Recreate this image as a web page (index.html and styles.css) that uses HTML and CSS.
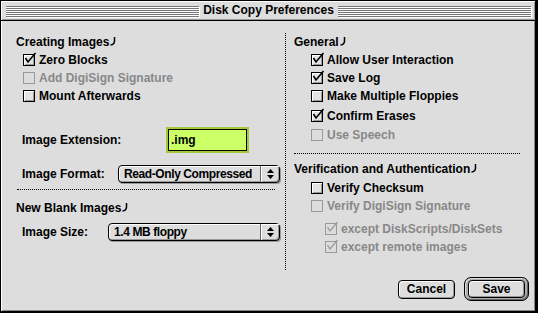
FILE: index.html
```html
<!DOCTYPE html>
<html lang="en">
  <head>
    <meta charset="UTF-8" />
    <title>Disk Copy Preferences</title>
    <link rel="stylesheet" href="styles.css">
  </head>
  <body>
    <div class="window">
      <div class="titlebar">
        <span class="stripes"></span>
        <span class="title">Disk Copy Preferences</span>
        <span class="stripes"></span>
      </div>

      <div class="content">
        <div class="col left">
          <div class="heading">Creating Images<svg class="mark" width="6" height="10"><path d="M4.5 1 V5 Q4.5 8.5 0.5 9" /></svg></div>
          <div class="check on"><span class="box"><svg width="14" height="14"><path d="M2.5 6 L5 10 L12.5 1" /></svg></span>Zero Blocks</div>
          <div class="check off"><span class="box"></span>Add DigiSign Signature</div>
          <div class="check"><span class="box"></span>Mount Afterwards</div>

          <div class="field-row">
            <span class="label ext">Image Extension:</span>
            <span class="field">.img</span>
          </div>
          <div class="popup-row">
            <span class="label fmt">Image Format:</span>
            <span class="popup"><span class="value">Read-Only Compressed</span><span class="arrows"><svg width="7" height="10"><polygon points="0,4 3.5,0 7,4" /><polygon points="0,6 3.5,10 7,6" /></svg></span></span>
          </div>
          <div class="sep"></div>
          <div class="heading blank">New Blank Images<svg class="mark" width="6" height="10"><path d="M4.5 1 V5 Q4.5 8.5 0.5 9" /></svg></div>
          <div class="popup-row size">
            <span class="label sz">Image Size:</span>
            <span class="popup"><span class="value">1.4 MB floppy</span><span class="arrows"><svg width="7" height="10"><polygon points="0,4 3.5,0 7,4" /><polygon points="0,6 3.5,10 7,6" /></svg></span></span>
          </div>
        </div>

        <div class="col right">
          <div class="heading">General<svg class="mark" width="6" height="10"><path d="M4.5 1 V5 Q4.5 8.5 0.5 9" /></svg></div>
          <div class="check on"><span class="box"><svg width="14" height="14"><path d="M2.5 6 L5 10 L12.5 1" /></svg></span>Allow User Interaction</div>
          <div class="check on"><span class="box"><svg width="14" height="14"><path d="M2.5 6 L5 10 L12.5 1" /></svg></span>Save Log</div>
          <div class="check"><span class="box"></span>Make Multiple Floppies</div>
          <div class="check on confirm"><span class="box"><svg width="14" height="14"><path d="M2.5 6 L5 10 L12.5 1" /></svg></span>Confirm Erases</div>
          <div class="check off speech"><span class="box"></span>Use Speech</div>
          <div class="sep wide"></div>
          <div class="heading verify">Verification and Authentication<svg class="mark" width="6" height="10"><path d="M4.5 1 V5 Q4.5 8.5 0.5 9" /></svg></div>
          <div class="check checksum"><span class="box"></span>Verify Checksum</div>
          <div class="check off"><span class="box"></span>Verify DigiSign Signature</div>
          <div class="check off on sub first"><span class="box"><svg width="14" height="14"><path d="M2.5 6 L5 10 L12.5 1" /></svg></span>except DiskScripts/DiskSets</div>
          <div class="check off on sub"><span class="box"><svg width="14" height="14"><path d="M2.5 6 L5 10 L12.5 1" /></svg></span>except remote images</div>
        </div>
      </div>

      <div class="footer">
        <button class="btn">Cancel</button>
        <span class="default-ring"><button class="btn">Save</button></span>
      </div>
    </div>
  </body>
</html>
```

FILE: styles.css
```css
body {
  margin: 0;
  padding: 0;
  background: #000;
  font-family: "Liberation Sans", Arial, sans-serif;
  font-size: 12px;
  font-weight: bold;
  color: #000;
}

.window {
  width: 538px;
  height: 313px;
  box-sizing: border-box;
  border: 1px solid #000;
  border-right-width: 3px;
  border-bottom-width: 2px;
  background: #dddddd;
  box-shadow: inset 1px 1px 0 #fff, inset -1px -1px 0 #888;
  display: flex;
  flex-direction: column;
}

/* title bar */
.titlebar {
  height: 19px;
  border-bottom: 1px solid #000;
  display: flex;
  align-items: center;
  padding: 0 4px 0 5px;
  box-shadow: inset 1px 1px 0 #fff, inset -1px -1px 0 #999;
}

.titlebar .stripes {
  flex: 1;
  height: 11px;
  margin-top: 1px;
  background: repeating-linear-gradient(to bottom, #777 0 1px, #fff 1px 2px);
  box-shadow: 1px 1px 0 #fff;
}

.titlebar .title {
  padding: 0 4px;
  font-size: 12px;
  line-height: 19px;
}

/* columns */
.content {
  display: flex;
  padding-top: 12px;
  height: 237px;
}

.col {
  display: flex;
  flex-direction: column;
}

.left {
  width: 284px;
  box-sizing: border-box;
  padding: 0 5px 0 15px;
}

.right {
  flex: 1;
  border-left: 1px dotted #000;
  padding: 0 15px 0 8px;
}

.heading {
  height: 18px;
  line-height: 18px;
  display: flex;
  align-items: center;
  white-space: nowrap;
}

.heading .mark {
  margin-left: 1px;
  margin-top: -3px;
}

.heading .mark path {
  fill: none;
  stroke: #000;
  stroke-width: 1.5;
}

/* checkboxes */
.check {
  height: 18px;
  display: flex;
  align-items: center;
  gap: 4px;
  padding-left: 7px;
  white-space: nowrap;
}

.right .check {
  padding-left: 17px;
}

.right .check.sub {
  padding-left: 31px;
}

.check .box {
  position: relative;
  flex: none;
  width: 12px;
  height: 12px;
  box-sizing: border-box;
  border: 1px solid #000;
  background: #e4e4e4;
  box-shadow: inset 1px 1px 0 #fff, inset -1px -1px 0 #999;
}

.check .box svg {
  position: absolute;
  left: -1px;
  top: -3px;
  overflow: visible;
}

.check .box path {
  fill: none;
  stroke: #000;
  stroke-width: 1.6;
}

.check.off {
  color: #888;
}

.check.off .box {
  border-color: #999;
  background: #ddd;
  box-shadow: none;
}

.check.off .box path {
  stroke: #999;
  stroke-width: 1.3;
}

.check.confirm {
  margin-top: 2px;
}

.check.speech {
  margin-top: 1px;
}

.check.checksum {
  margin-top: 1px;
}

.check.sub.first {
  margin-top: 5px;
}

/* fields and popups */
.label {
  flex: none;
  padding-left: 6px;
  box-sizing: border-box;
  white-space: nowrap;
}

.label.ext { width: 152px; }
.label.fmt { width: 102px; }
.label.sz { width: 92px; }

.field-row {
  display: flex;
  align-items: center;
  height: 26px;
  margin-top: 22px;
}

.field {
  width: 79px;
  height: 22px;
  box-sizing: border-box;
  border: 1px solid #000;
  background: #ccff66;
  box-shadow: 0 0 0 2px #a3c93a;
  padding-left: 2px;
  line-height: 20px;
}

.popup-row {
  display: flex;
  align-items: center;
  height: 22px;
  margin-top: 10px;
}

.popup-row.size {
  margin-top: 4px;
}

.popup {
  flex: 1;
  min-width: 0;
  height: 18px;
  box-sizing: border-box;
  display: flex;
  border: 1px solid #000;
  border-radius: 4px;
  background: #dddddd;
  box-shadow: inset 1px 1px 0 #fff, inset -1px -1px 0 #999, 1px 1px 0 #999;
}

.popup .value {
  flex: 1;
  min-width: 0;
  padding-left: 5px;
  line-height: 16px;
  letter-spacing: -0.4px;
  white-space: nowrap;
  overflow: hidden;
}

.popup .arrows {
  flex: none;
  width: 18px;
  border-left: 1px solid #666;
  display: flex;
  align-items: center;
  justify-content: center;
  box-shadow: inset 1px 1px 0 #fff;
}

.sep {
  margin: 4px 5px 0 1px;
  border-top: 1px dotted #000;
}

.sep.wide {
  margin: 9px 0 0 0;
}

.heading.blank {
  margin-top: 9px;
}

.heading.verify {
  margin-top: 6px;
}

/* buttons */
.footer {
  display: flex;
  justify-content: flex-end;
  align-items: center;
  gap: 9px;
  padding: 7px 6px 0 0;
}

.btn {
  width: 57px;
  height: 19px;
  box-sizing: border-box;
  border: 1px solid #000;
  border-radius: 4px;
  background: #dddddd;
  box-shadow: inset 1px 1px 0 #fff, inset -1px -1px 0 #999;
  font-family: "Liberation Sans", Arial, sans-serif;
  font-size: 12px;
  font-weight: bold;
  color: #000;
  padding: 0;
  line-height: 17px;
}

.default-ring {
  display: flex;
  padding: 2px 3px;
  border: 1px solid #000;
  border-radius: 7px;
  background: #aaa;
  box-shadow: inset 1px 1px 0 #ddd, inset -1px -1px 0 #666;
}

.default-ring .btn {
  width: 57px;
  height: 18px;
}
```
